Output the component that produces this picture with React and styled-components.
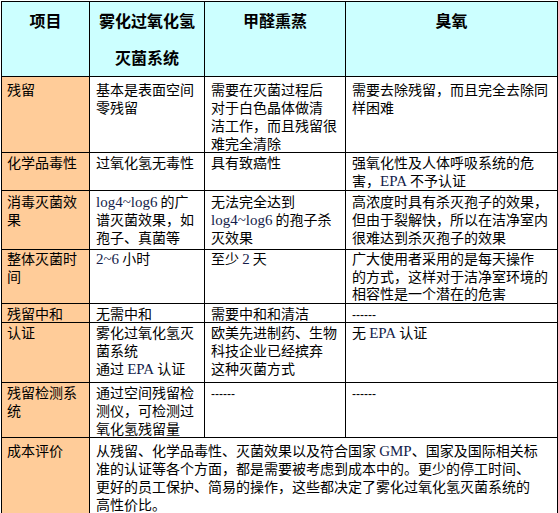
import React from 'react'
import styled, { createGlobalStyle } from 'styled-components'

const GlobalStyle = createGlobalStyle`
  html, body {
    margin: 0;
    padding: 0;
    background: #fff;
  }
  body {
    font-family: "Noto Sans CJK SC", "Liberation Sans", sans-serif;
    color: #000;
  }
`

const Page = styled.div`
  padding: 1px 0 0 1px;
`

const Table = styled.table`
  width: 556px;
  border-collapse: collapse;
  table-layout: fixed;
`

const HeadCell = styled.th`
  background: #ccffff;
  border: 1px solid #000;
  padding: 0;
  font-size: 16px;
  font-weight: bold;
  line-height: 37px;
  text-align: center;
  vertical-align: top;
  white-space: nowrap;
`

const Row = styled.tr`
  height: ${p => p.$h}px;
`

const Cell = styled.td`
  background: ${p => (p.$label ? '#ffcc99' : '#fff')};
  border: 1px solid #000;
  padding: ${p => p.$top || 0}px 0 0 ${p => (p.$label ? 5 : 6)}px;
  font-size: 14px;
  line-height: ${p => p.$lh || 18}px;
  vertical-align: top;
  white-space: nowrap;
  position: relative;

  ${p => p.$mark && `
    &::after {
      content: '';
      position: absolute;
      right: -3px;
      top: 0;
      width: 2px;
      height: 10px;
      background: #000;
    }
  `}
`

const Latin = styled.span`
  font-family: "Liberation Serif", "Times New Roman", serif;
  font-size: 15px;
  line-height: 1;
  color: #141c4a;
`

const Dash = styled.span`
  font-family: "Liberation Sans", Arial, sans-serif;
  font-size: 12px;
  line-height: 1;
`

const rows = [
  {
    h: 76,
    top: 3,
    label: '残留',
    cells: [
      <>基本是表面空间<br />零残留</>,
      <>需要在灭菌过程后<br />对于白色晶体做清<br />洁工作，而且残留很<br />难完全清除</>,
      <>需要去除残留，而且完全去除同<br />样困难</>,
    ],
  },
  {
    h: 38,
    label: '化学品毒性',
    cells: [
      '过氧化氢无毒性',
      '具有致癌性',
      <>强氧化性及人体呼吸系统的危<br />害，<Latin>EPA</Latin> 不予认证</>,
    ],
  },
  {
    h: 59,
    top: 1,
    label: <>消毒灭菌效<br />果</>,
    cells: [
      <><Latin>log4~log6</Latin> 的广<br />谱灭菌效果，如<br />孢子、真菌等</>,
      <>无法完全达到<br /><Latin>log4~log6</Latin> 的孢子杀<br />灭效果</>,
      <>高浓度时具有杀灭孢子的效果，<br />但由于裂解快，所以在洁净室内<br />很难达到杀灭孢子的效果</>,
    ],
  },
  {
    h: 54,
    lh: 17.6,
    label: <>整体灭菌时<br />间</>,
    cells: [
      <><Latin>2~6</Latin> 小时</>,
      <>至少 <Latin>2</Latin> 天</>,
      <>广大使用者采用的是每天操作<br />的方式，这样对于洁净室环境的<br />相容性是一个潜在的危害</>,
    ],
  },
  {
    h: 19,
    label: '残留中和',
    cells: ['无需中和', '需要中和和清洁', <Dash>------</Dash>],
    mark: true,
  },
  {
    h: 60,
    label: '认证',
    cells: [
      <>雾化过氧化氢灭<br />菌系统<br />通过 <Latin>EPA</Latin> 认证</>,
      <>欧美先进制药、生物<br />科技企业已经摈弃<br />这种灭菌方式</>,
      <>无 <Latin>EPA</Latin> 认证</>,
    ],
  },
  {
    h: 53,
    label: <>残留检测系<br />统</>,
    cells: [
      <>通过空间残留检<br />测仪，可检测过<br />氧化氢残留量</>,
      <Dash>------</Dash>,
      <Dash>------</Dash>,
    ],
  },
]

export default function App() {
  return (
    <>
      <GlobalStyle />
      <Page>
        <Table>
          <colgroup>
            <col style={{ width: 88 }} />
            <col style={{ width: 115 }} />
            <col style={{ width: 141 }} />
            <col style={{ width: 212 }} />
          </colgroup>
          <thead>
            <tr>
              <HeadCell>项目</HeadCell>
              <HeadCell>雾化过氧化氢<br />灭菌系统</HeadCell>
              <HeadCell>甲醛熏蒸</HeadCell>
              <HeadCell>臭氧</HeadCell>
            </tr>
          </thead>
          <tbody>
            {rows.map((r, i) => (
              <Row key={i} $h={r.h}>
                <Cell $label $top={r.top} $lh={r.lh}>{r.label}</Cell>
                {r.cells.map((c, j) => (
                  <Cell key={j} $top={r.top} $lh={r.lh} $mark={r.mark && j === 2}>{c}</Cell>
                ))}
              </Row>
            ))}
            <Row $h={77}>
              <Cell $label $top={3}>成本评价</Cell>
              <Cell colSpan={3} $top={3}>
                从残留、化学品毒性、灭菌效果以及符合国家 <Latin>GMP</Latin>、国家及国际相关标<br />
                准的认证等各个方面，都是需要被考虑到成本中的。更少的停工时间、<br />
                更好的员工保护、简易的操作，这些都决定了雾化过氧化氢灭菌系统的<br />
                高性价比。
              </Cell>
            </Row>
          </tbody>
        </Table>
      </Page>
    </>
  )
}
